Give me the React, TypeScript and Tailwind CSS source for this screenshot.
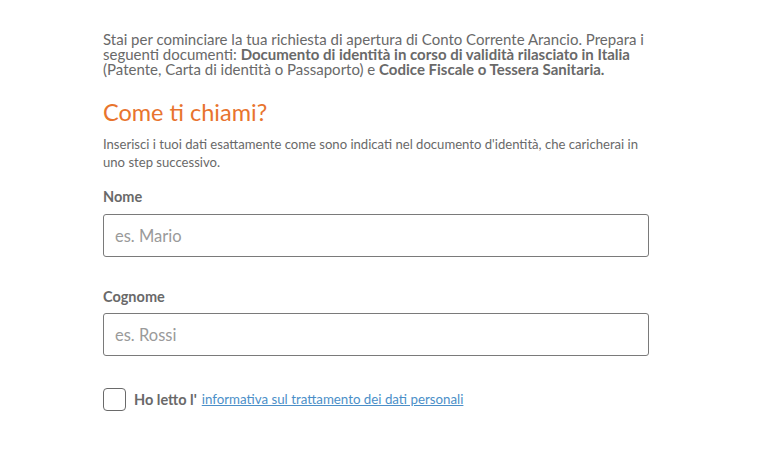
export default function App() {
  return (
    <div className="min-h-[450px] w-full bg-white font-['Lato','Liberation_Sans',sans-serif] text-[#696969]">
      <div className="ml-[103px] w-[546px] pt-[32px]">
        <p className="text-[15px] leading-[15px]">
          Stai per cominciare la tua richiesta di apertura di Conto Corrente Arancio. Prepara i seguenti documenti:{' '}
          <strong className="font-bold">Documento di identità in corso di validità rilasciato in Italia</strong> (Patente, Carta di identità o Passaporto) e{' '}
          <strong className="font-bold">Codice Fiscale o Tessera Sanitaria.</strong>
        </p>

        <h1 className="mt-[20px] text-[23.5px] leading-[30px] text-[#e8742e]">Come ti chiami?</h1>

        <p className="mt-[8px] text-[13.1px] leading-[18px]">
          Inserisci i tuoi dati esattamente come sono indicati nel documento d'identità, che caricherai in uno step successivo.
        </p>

        <label className="mt-[17px] block text-[14.5px] font-bold leading-[18px]">Nome</label>
        <input
          type="text"
          placeholder="es. Mario"
          className="mt-[8px] block h-[43px] w-full rounded-[3px] border border-[#7a7a7a] px-[11px] text-[16.5px] text-[#333] outline-none placeholder:text-[#9a9a9a]"
        />

        <label className="mt-[31px] block text-[14.5px] font-bold leading-[18px]">Cognome</label>
        <input
          type="text"
          placeholder="es. Rossi"
          className="mt-[7px] block h-[43px] w-full rounded-[3px] border border-[#7a7a7a] px-[11px] text-[16.5px] text-[#333] outline-none placeholder:text-[#9a9a9a]"
        />

        <div className="mt-[32px] flex items-center gap-[8px]">
          <span className="block h-[23px] w-[23px] rounded-[4px] border border-[#6a6a6a] bg-white" />
          <span className="text-[14.5px] font-bold">Ho letto l'</span>
          <a href="#" className="-ml-[3px] text-[13.3px] text-[#4b8fc8] underline">
            informativa sul trattamento dei dati personali
          </a>
        </div>
      </div>
    </div>
  );
}
